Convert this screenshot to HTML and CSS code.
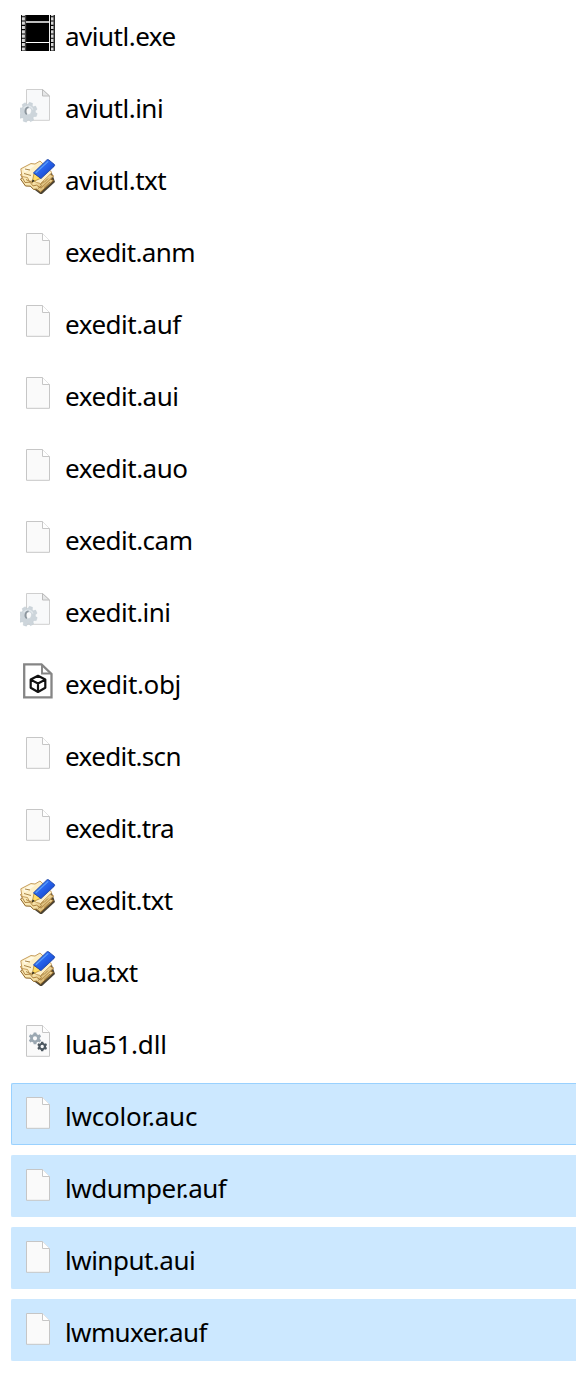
FILE: index.html
```html
<!DOCTYPE html>
<html lang="en">
<head>
<meta charset="utf-8">
<title>Files</title>
<link rel="stylesheet" href="styles.css">
</head>
<body>
<svg class="defs" width="0" height="0" aria-hidden="true">
  <defs>
    <linearGradient id="pen" x1="0" y1="0" x2="1" y2="1"><stop offset="0" stop-color="#3f82f4"/><stop offset=".5" stop-color="#2560ea"/><stop offset="1" stop-color="#1238ae"/></linearGradient>
    <linearGradient id="paper" x1="0" y1="0" x2="1" y2="1"><stop offset="0" stop-color="#fff3cc"/><stop offset=".6" stop-color="#f6e2a8"/><stop offset="1" stop-color="#b98a3e"/></linearGradient>
    <path id="gear" d="M-1.8-8.5h3.6l.5 2.3 1.6.7 2-1.3 2.6 2.6-1.3 2 .6 1.5 2.3.5v3.2l-2.3.5-.6 1.6 1.3 2-2.6 2.5-2-1.3-1.6.7-.5 2.3h-3.6l-.5-2.3-1.6-.7-2 1.3-2.5-2.5 1.3-2-.7-1.6-2.3-.5v-3.2l2.3-.5.7-1.5-1.3-2 2.5-2.6 2 1.3 1.6-.7zM0-3.2a3.5 3.5 0 1 0 0 7a3.5 3.5 0 0 0 0-7z" fill-rule="evenodd"/>
    <path id="cog" d="M-1.3-5.8h2.6l.4 1.7 1.4.8 1.7-.6 1.3 2.2-1.3 1.2v1.3l1.3 1.2-1.3 2.2-1.7-.6-1.4.8-.4 1.7h-2.6l-.4-1.7-1.4-.8-1.7.6-1.3-2.2 1.3-1.2V-.5l-1.3-1.2 1.3-2.2 1.7.6 1.4-.8zM0-2a2.1 2.1 0 1 0 0 4.2a2.1 2.1 0 0 0 0-4.2z" fill-rule="evenodd"/>
    <symbol id="doc" viewBox="0 0 36 36">
      <path d="M6.5 2.5h16l7 7v23.8h-23z" fill="#fafafa" stroke="#c6c6c6"/>
      <path d="M22.5 2.5v7h7" fill="#fff" stroke="#c6c6c6"/>
    </symbol>
    <symbol id="ini" viewBox="0 0 36 36">
      <path d="M6.5 2.5h16l7 6.5v24.3h-23z" fill="#f8f9fa" stroke="#cfcfcf"/>
      <path d="M22.5 2.5V9h7z" fill="#e6e7e8" stroke="#bcbcbc"/>
      <use href="#gear" transform="translate(8.3 23.9) rotate(18) scale(.92 1)" fill="#cdd5db" stroke="#bcc7cf" stroke-width=".4"/>
      <path d="M3.6 21.4a5.3 5.3 0 0 1 9.3 1.2" fill="none" stroke="#e1e7eb" stroke-width="1.2"/>
      <path d="M8.6 20.2a3.6 4 0 0 0-1.8 7.2" fill="none" stroke="#8c969e" stroke-width="1.6"/>
    </symbol>
    <symbol id="dll" viewBox="0 0 36 36">
      <use href="#doc"/>
      <use href="#cog" transform="translate(15 15.2)" fill="#9ba8b2"/>
      <use href="#cog" transform="translate(22.2 23.4) scale(.8)" fill="#4d5860"/>
    </symbol>
    <symbol id="film" viewBox="0 0 36 36">
      <path d="M1 0h34v36H1z" fill="#000"/>
      <path d="M3.4 0v36M32.5 0v36" stroke="#d8d8d8" stroke-width="3" stroke-dasharray="3.2 1.1" stroke-dashoffset="2"/>
      <path d="M5.6 0v36M34 0v36" stroke="#444" stroke-width="1.2"/>
      <path d="M6 7h23" stroke="#bdbdbd" stroke-width="2"/>
      <path d="M6 27.5h23" stroke="#fff" stroke-width="1"/>
      <path d="M29.5 0v36" stroke="#eee" stroke-width="1"/>
    </symbol>
    <symbol id="note" viewBox="0 0 36 36">
      <path d="M2 21L19.5 34.6q1.5 1 3 0L35 23l-3-9z" fill="#2c2210" opacity=".85"/>
      <path d="M.5 20l12-9 21 10.5-13 11.7-4-3-3 .2-3-3.2-5-.2z" fill="url(#paper)" stroke="#8c6324"/>
      <path d="M.5 15.5l12-8 21.2 9.5-12.7 12.2-4.5-3-3.5.7-3-3.7-5 .3z" fill="url(#paper)" stroke="#b08440"/>
      <path d="M.8 9.8L11 4.5l4 .5 5-3 12 11.5-11.5 11-4-1-3-2-4 1-2-4-5.5-1z" fill="#fdefc6" stroke="#c09450" stroke-width=".9"/>
      <path d="M3 10.3l8-4.5 4 .7-10 7z" fill="#fff9e4"/>
      <path d="M5 10l5 1M4 14.5l7 2M20 26l4-3.5M24 23.5l4-4M18 29.5l4-3M24 28.5l6-5.5M6 20.5l7 3.5" stroke="#a07a3a" stroke-width=".9"/>
      <path d="M14 14.5l6.8 4.7-8.6 4z" fill="#ffdc65" stroke="#a87c28" stroke-width=".7"/>
      <path d="M12.8 20.4l2 1.6-3 1.2z" fill="#222"/>
      <path d="M13.4 13.9L26.8.9q1-.8 2 0l5.4 4.4q.9 1 0 2L21 19.6z" fill="url(#pen)" stroke="#143c9f" stroke-width=".8"/>
      <path d="M15.8 13.8L28.2 2.4" stroke="#5a9dfa" stroke-width="1.2"/>
    </symbol>
    <symbol id="obj" viewBox="0 0 36 36">
      <path d="M4.2 1.4h17.3l10 9.6v23.4H4.2z" fill="#fff" stroke="#858585" stroke-width="2.3"/>
      <path d="M22 1.5v9h9" fill="none" stroke="#858585" stroke-width="1.9"/>
      <path d="M18 12.8l7.3 3.8v8.2L18 29l-7.3-4.2v-8.2zM10.7 16.6l7.3 3.9 7.3-3.9M18 20.5V29" fill="none" stroke="#111" stroke-width="2.2" stroke-linejoin="round"/>
    </symbol>
  </defs>
</svg>
<ul class="files">
  <li class="file"><svg class="icon"><use href="#film"/></svg><span class="name">aviutl.exe</span></li>
  <li class="file"><svg class="icon"><use href="#ini"/></svg><span class="name">aviutl.ini</span></li>
  <li class="file"><svg class="icon"><use href="#note"/></svg><span class="name">aviutl.txt</span></li>
  <li class="file"><svg class="icon"><use href="#doc"/></svg><span class="name tight">exedit.anm</span></li>
  <li class="file"><svg class="icon"><use href="#doc"/></svg><span class="name">exedit.auf</span></li>
  <li class="file"><svg class="icon"><use href="#doc"/></svg><span class="name">exedit.aui</span></li>
  <li class="file"><svg class="icon"><use href="#doc"/></svg><span class="name">exedit.auo</span></li>
  <li class="file"><svg class="icon"><use href="#doc"/></svg><span class="name">exedit.cam</span></li>
  <li class="file"><svg class="icon"><use href="#ini"/></svg><span class="name">exedit.ini</span></li>
  <li class="file"><svg class="icon"><use href="#obj"/></svg><span class="name loose">exedit.obj</span></li>
  <li class="file"><svg class="icon"><use href="#doc"/></svg><span class="name tight">exedit.scn</span></li>
  <li class="file"><svg class="icon"><use href="#doc"/></svg><span class="name tight">exedit.tra</span></li>
  <li class="file"><svg class="icon"><use href="#note"/></svg><span class="name tight">exedit.txt</span></li>
  <li class="file"><svg class="icon"><use href="#note"/></svg><span class="name tight">lua.txt</span></li>
  <li class="file"><svg class="icon"><use href="#dll"/></svg><span class="name wide">lua51.dll</span></li>
  <li class="file selected focused"><svg class="icon"><use href="#doc"/></svg><span class="name wide">lwcolor.auc</span></li>
  <li class="file selected"><svg class="icon"><use href="#doc"/></svg><span class="name">lwdumper.auf</span></li>
  <li class="file selected"><svg class="icon"><use href="#doc"/></svg><span class="name">lwinput.aui</span></li>
  <li class="file selected"><svg class="icon"><use href="#doc"/></svg><span class="name tight">lwmuxer.auf</span></li>
</ul>
</body>
</html>
```
FILE: styles.css
```css
* { box-sizing: border-box; }
html, body { margin: 0; background: #fff; }
body { height: 1375px; overflow: hidden; }
.defs { display: block; }
.files {
  list-style: none;
  margin: 0;
  padding: 3px 0 0 11px;
  display: flex;
  flex-direction: column;
  gap: 10px;
}
.file {
  height: 62px;
  display: flex;
  align-items: center;
  gap: 9px;
  padding-left: 8px;
  border: 1px solid transparent;
  border-right: 0;
  border-radius: 2px 0 0 2px;
}
.selected { background: #cce8ff; border-color: #cce8ff; }
.focused { border-color: #99d1ff; }
.icon { width: 36px; height: 36px; margin-bottom: 2px; flex: none; }
.name {
  font: 26px/36px "Noto Sans", "Open Sans", sans-serif;
  letter-spacing: -0.5px;
  color: #000;
  padding-top: 3px;
  white-space: nowrap;
}
.tight { letter-spacing: -0.62px; }
.loose { letter-spacing: -0.36px; }
.wide { letter-spacing: -0.2px; }
```
